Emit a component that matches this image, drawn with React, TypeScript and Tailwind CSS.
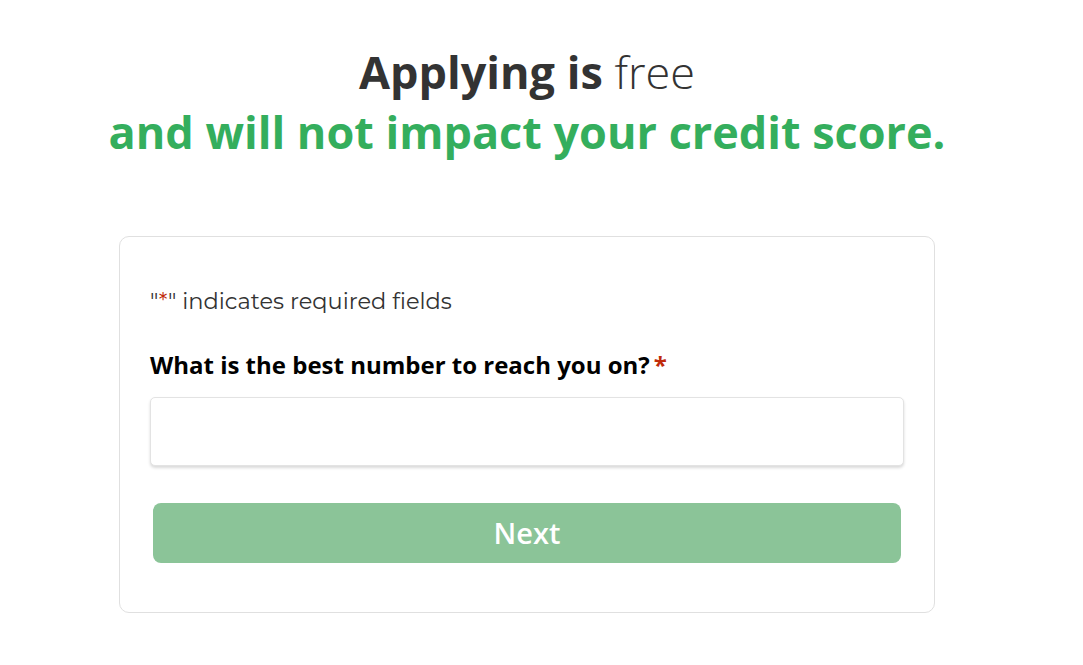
export default function App() {
  return (
    <div className="min-h-[665px] w-[1054px] bg-white font-['Open_Sans',sans-serif]">
      <div className="pt-[42px] text-center">
        <h1 className="text-[45px] leading-[60px] text-[#333333]">
          <span className="font-bold">Applying is</span> <span className="font-light">free</span>
        </h1>
        <p className="text-[45px] font-bold leading-[60px] text-[#34ae5d]">
          and will not impact your credit score.
        </p>
      </div>

      <div className="mx-auto mt-[74px] w-[816px] rounded-[10px] border border-[#e0e0e0] px-[30px] pb-[49px] pt-[49px]">
        <p className="font-['Montserrat','DejaVu_Sans',sans-serif] text-[22.5px] leading-[30px] text-[#333]">
          &quot;<span className="text-[#c02b0a]">*</span>&quot; indicates required fields
        </p>

        <label className="mt-[33px] block text-[24px] font-bold leading-[32px] text-black">
          What is the best number to reach you on?
          <span className="ml-1 text-[#c02b0a]">*</span>
        </label>

        <input
          type="tel"
          className="mt-[16px] block h-[69px] w-full rounded-[5px] border border-[#e3e3e3] bg-white shadow-[0_2px_3px_rgba(0,0,0,0.15)] outline-none"
        />

        <button
          type="button"
          className="mx-[3px] mt-[37px] flex h-[60px] w-[748px] items-center justify-center rounded-[8px] bg-[#8bc498] text-[29px] font-semibold text-white"
        >
          Next
        </button>
      </div>
    </div>
  );
}
